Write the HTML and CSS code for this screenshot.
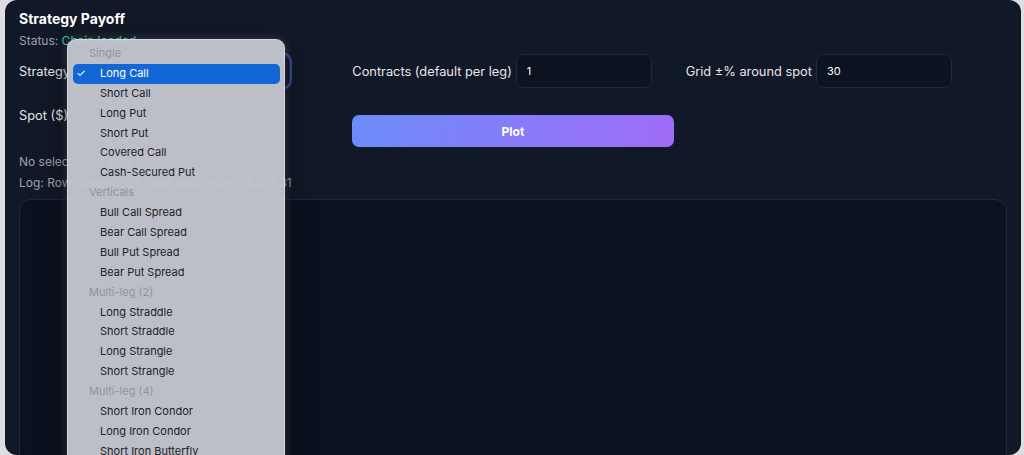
FILE: index.html
```html
<!DOCTYPE html>
<html lang="en">
<head>
<meta charset="utf-8">
<title>Strategy Payoff</title>
<link rel="stylesheet" href="styles.css">
</head>
<body>
<div class="page">
  <section class="card">
    <h2 class="title">Strategy Payoff</h2>
    <div class="status">Status: <span class="ok">Chain loaded</span></div>
    <div class="controls">
      <label class="field">
        <span class="label">Strategy</span>
        <span class="select">Long Call</span>
      </label>
      <label class="field">
        <span class="label">Contracts (default per leg)</span>
        <input class="input" type="text" value="1">
      </label>
      <label class="field">
        <span class="label">Grid ±% around spot</span>
        <input class="input" type="text" value="30">
      </label>
      <label class="field">
        <span class="label">Spot ($)</span>
        <input class="input" type="text" value="">
      </label>
      <div class="action">
        <button class="plot" type="button">Plot</button>
      </div>
    </div>
    <div class="note">No selection — pick a row</div>
    <div class="note">Log: Rows loaded: 24 · last spot price = $589.31</div>
    <div class="chart"></div>
  </section>

  <div class="menu">
    <div class="group">Single</div>
    <div class="item selected"><span class="check">✓</span>Long Call</div>
    <div class="item">Short Call</div>
    <div class="item">Long Put</div>
    <div class="item">Short Put</div>
    <div class="item">Covered Call</div>
    <div class="item">Cash-Secured Put</div>
    <div class="group">Verticals</div>
    <div class="item">Bull Call Spread</div>
    <div class="item">Bear Call Spread</div>
    <div class="item">Bull Put Spread</div>
    <div class="item">Bear Put Spread</div>
    <div class="group">Multi-leg (2)</div>
    <div class="item">Long Straddle</div>
    <div class="item">Short Straddle</div>
    <div class="item">Long Strangle</div>
    <div class="item">Short Strangle</div>
    <div class="group">Multi-leg (4)</div>
    <div class="item">Short Iron Condor</div>
    <div class="item">Long Iron Condor</div>
    <div class="item">Short Iron Butterfly</div>
  </div>
</div>
</body>
</html>
```

FILE: styles.css
```css
* { box-sizing: border-box; }

html, body {
  margin: 0;
  height: 100%;
  overflow: hidden;
  background: #dcdee2;
  font-family: Inter, "Liberation Sans", sans-serif;
}

.page {
  position: relative;
  padding: 0 3px 0 5px;
  height: 100%;
}

.card {
  background: #111827;
  border-radius: 12px;
  padding: 10px 14px 0 14px;
  height: 100%;
  color: #e5e7eb;
}

.title {
  margin: 0;
  font-size: 14px;
  font-weight: 700;
  color: #ffffff;
  line-height: 17px;
}

.status {
  margin-top: 6px;
  font-size: 12px;
  line-height: 15px;
  color: #9ca3af;
}

.ok { color: #34d399; }

.controls {
  margin-top: 6px;
  display: grid;
  grid-template-columns: repeat(3, 1fr);
  column-gap: 12px;
  row-gap: 10px;
  align-items: start;
}

.field {
  display: flex;
  align-items: center;
  gap: 4px;
  height: 34px;
}

.label {
  font-size: 12.8px;
  color: #e5e7eb;
  white-space: nowrap;
}

.select {
  width: 216px;
  height: 34px;
  border-radius: 8px;
  background: #0b1220;
  border: 1px solid #1f2937;
  box-shadow: 0 0 0 2px rgba(59, 92, 200, 0.75);
  font-size: 12px;
  color: #fff;
  display: flex;
  align-items: center;
  padding-left: 10px;
}

.input {
  width: 136px;
  height: 34px;
  border-radius: 8px;
  background: #0b1220;
  border: 1px solid #1f2937;
  color: #ffffff;
  font-family: Inter, "Liberation Sans", sans-serif;
  font-size: 11px;
  padding: 0 10px;
  outline: none;
}

.action { padding-top: 17px; }

.plot {
  width: 100%;
  height: 32px;
  border: 0;
  border-radius: 7px;
  background: linear-gradient(100deg, #6c8cf9 0%, #a06cf8 100%);
  color: #ffffff;
  font-family: Inter, "Liberation Sans", sans-serif;
  font-size: 12px;
  font-weight: 700;
}

.note {
  font-size: 12px;
  line-height: 15px;
  color: #9ca3af;
  margin-top: 6px;
}

.controls + .note { margin-top: 7px; }

.chart {
  margin-top: 9px;
  height: 300px;
  background: #0b1120;
  border: 1px solid #1f2937;
  border-radius: 12px;
}

/* open native-style popup menu */
.menu {
  position: absolute;
  left: 67px;
  top: 39px;
  width: 218px;
  height: 430px;
  overflow: hidden;
  padding: 4px 4px 0 5px;
  background: rgba(194, 197, 205, 0.97);
  border: 1px solid rgba(255, 255, 255, 0.35);
  border-radius: 9px;
  box-shadow: 0 10px 30px rgba(0, 0, 0, 0.45), 0 0 10px rgba(200, 205, 215, 0.25);
  font-family: Inter, "Liberation Sans", sans-serif;
  font-size: 11px;
}

.group {
  height: 19.9px;
  line-height: 19.9px;
  padding-left: 16px;
  color: #8f939b;
}

.item {
  position: relative;
  height: 19.9px;
  line-height: 19.9px;
  padding-left: 27px;
  color: #1e2126;
}

.item.selected {
  background: #1267d4;
  color: #ffffff;
  border-radius: 5px;
}

.check {
  position: absolute;
  left: 3px;
  top: 0;
  font-size: 11px;
}
```
